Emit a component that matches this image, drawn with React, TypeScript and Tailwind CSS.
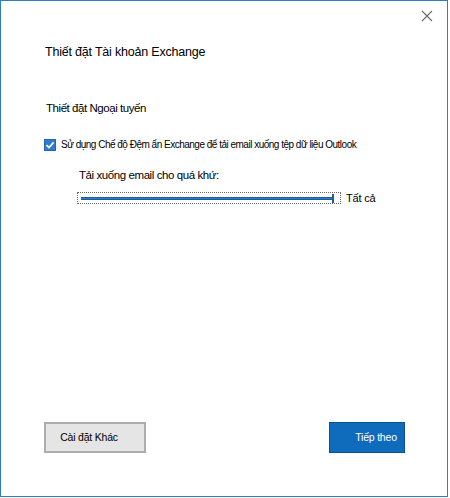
import React from "react";

export default function App() {
  return (
    <div className="w-[450px] h-[498px] bg-white" style={{ fontFamily: '"Liberation Sans", Arial, sans-serif' }}>
      <div className="w-[448px] h-[497px] border border-[#2f7bc4] bg-white flex flex-col text-[#000]">
        <div className="flex justify-end pr-[14px] pt-[9px] h-[24px]">
          <svg width="12" height="12" viewBox="0 0 12 12" className="text-[#6b6b6b]">
            <path d="M1 1 L11 11 M11 1 L1 11" stroke="currentColor" strokeWidth="1.1" fill="none" />
          </svg>
        </div>
        <div className="pl-[44px] mt-[19px] text-[12.5px] tracking-[-0.2px] leading-[16px]">Thiết đặt Tài khoản Exchange</div>
        <div className="pl-[45px] mt-[40px] text-[11.5px] tracking-[-0.45px] leading-[16px]">Thiết đặt Ngoại tuyến</div>
        <div className="pl-[43px] mt-[22px] flex items-center gap-[5px]">
          <div className="w-[12px] h-[12px] bg-[#2f7bd0] border border-[#2266b5] flex items-center justify-center">
            <svg width="10" height="10" viewBox="0 0 10 10">
              <path d="M1.5 5.2 L4 7.6 L8.6 2.4" stroke="white" strokeWidth="1.6" fill="none" />
            </svg>
          </div>
          <span className="text-[10px] tracking-[-0.5px] leading-[14px]">
            Sử dụng Chế độ Đệm ẩn Exchange để tải email xuống tệp dữ liệu Outlook
          </span>
        </div>
        <div className="pl-[78px] mt-[15px] text-[11.5px] tracking-[-0.42px] leading-[16px]">Tải xuống email cho quá khứ:</div>
        <div className="pl-[76px] mt-[8px] flex items-center">
          <div className="w-[264px] h-[12px] border border-dotted border-[#6a6a6a] flex items-center px-[3px] relative">
            <div className="flex-1 h-[3px] bg-[#2f7bc4] border-y border-[#1a5c9e]" />
            <div className="w-[2px] h-[9px] bg-[#1a5c9e] mr-[3px]" />
          </div>
          <span className="ml-[5px] text-[11px] tracking-[-0.2px] leading-[14px]">Tất cả</span>
        </div>
        <div className="flex-1" />
        <div className="flex justify-between pl-[43px] pr-[42px] mb-[43px]">
          <button className="w-[102px] h-[31px] bg-[#e5e5e5] border-2 border-[#adadad] text-[10.5px] tracking-[-0.2px] pr-[12px]">Cài đặt Khác</button>
          <button className="w-[76px] h-[31px] bg-[#0f6cbd] border border-[#0b5394] text-white text-[10.5px] tracking-[-0.2px] pl-[18px]">Tiếp theo</button>
        </div>
      </div>
    </div>
  );
}
